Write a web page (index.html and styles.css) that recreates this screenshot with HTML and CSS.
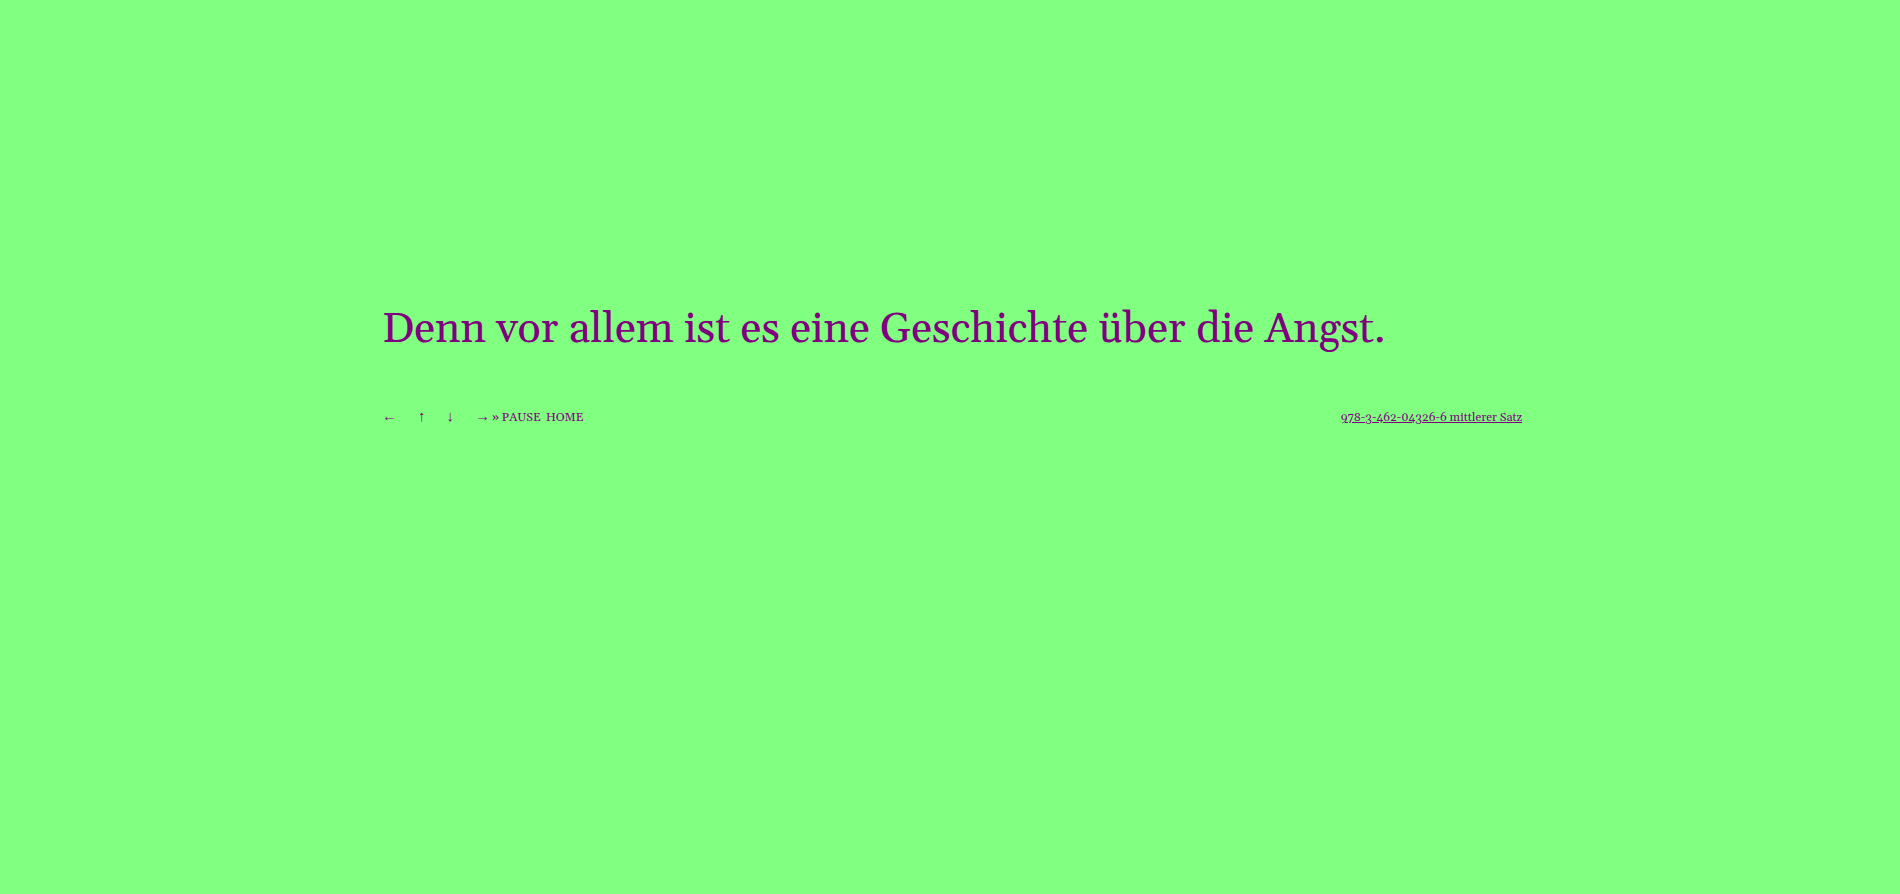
FILE: index.html
```html
<!DOCTYPE html>
<html lang="de">
<head>
    <meta charset="UTF-8">
    <meta name="viewport" content="width=device-width, initial-scale=1.0">
    <title>mittlerer Satz</title>
    <link rel="stylesheet" href="styles.css">
</head>
<body>
    <main class="container">
        <p class="satz">Denn vor allem ist es eine Geschichte über die Angst.</p>

        <div class="leiste">
            <nav class="navigation">
                <div class="pfeile">
                    <a href="#zurueck">←</a>
                    <a href="#hoch">↑</a>
                    <a href="#runter">↓</a>
                    <a href="#weiter">→</a>
                </div>
                <a class="pause" href="#pause">» PAUSE</a>
                <a href="#home">HOME</a>
            </nav>
            <a class="quelle" href="#buch">978-3-462-04326-6 mittlerer Satz</a>
        </div>
    </main>
</body>
</html>
```

FILE: styles.css
```css
body {
    margin: 0;
    background-color: #80ff80;
    color: purple;
    font-family: Georgia, Gelasio, "Liberation Serif", serif;
}

a {
    color: purple;
}

.container {
    width: 60%;
    margin: 300px auto 0;
    padding-left: 4px;
}

.satz {
    margin: 0;
    font-size: 43px;
    line-height: 60px;
}

.leiste {
    display: flex;
    justify-content: space-between;
    align-items: baseline;
    margin-top: 46px;
    font-size: 12px;
    line-height: 20px;
}

.navigation {
    display: flex;
    align-items: baseline;
}

.navigation a {
    text-decoration: none;
}

.pfeile {
    display: flex;
    gap: 21px;
    margin-right: 2px;
    font-family: "Liberation Serif", serif;
    font-size: 15px;
}

.pause {
    margin-right: 5px;
}
```
